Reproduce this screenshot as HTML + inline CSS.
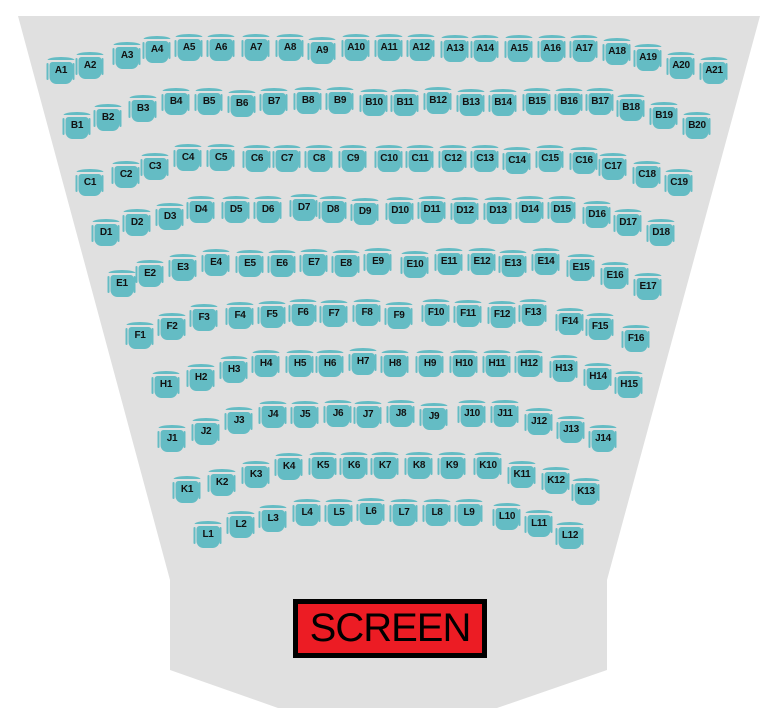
<!DOCTYPE html>
<html><head><meta charset="utf-8"><style>
html,body{margin:0;padding:0;background:#fff;}
body{width:776px;height:726px;position:relative;overflow:hidden;font-family:"Liberation Sans",sans-serif;}
i{position:absolute;display:block;font-style:normal;width:23px;height:22px;transform:translate(-11.5px,-9px);background:#64bcc4;border-radius:3px 3px 7px 7px;font-size:10px;font-weight:bold;color:#111;text-align:center;line-height:18px;letter-spacing:-0.3px;}
i::before{content:"";position:absolute;left:-2px;top:-5px;width:27px;height:3px;background:#64bcc4;border-radius:50% 50% 0 0/100% 100% 0 0;}
i::after{content:"";position:absolute;left:-3px;top:1px;width:2px;height:17px;background:#64bcc4;border-radius:2px;box-shadow:26px 0 0 #64bcc4;}
.scr{position:absolute;left:293px;top:599px;width:184px;height:49px;border:5px solid #000;background:#ec1c24;font-family:"Liberation Sans",sans-serif;font-size:40px;line-height:49px;color:#000;text-align:center;letter-spacing:-1px;}
</style></head><body>
<svg width="776" height="726" style="position:absolute;left:0;top:0"><polygon points="18,16 760,16 607,580 607,670 497,708 278,708 170,670 170,580" fill="#e0e0e0"/></svg>
<i style="left:61px;top:71px">A1</i><i style="left:90px;top:66px">A2</i><i style="left:127px;top:56px">A3</i><i style="left:157px;top:50px">A4</i><i style="left:189px;top:48px">A5</i><i style="left:221px;top:48px">A6</i><i style="left:256px;top:48px">A7</i><i style="left:290px;top:48px">A8</i><i style="left:322px;top:51px">A9</i><i style="left:356px;top:48px">A10</i><i style="left:389px;top:48px">A11</i><i style="left:421px;top:48px">A12</i><i style="left:455px;top:49px">A13</i><i style="left:485px;top:49px">A14</i><i style="left:519px;top:49px">A15</i><i style="left:552px;top:49px">A16</i><i style="left:584px;top:49px">A17</i><i style="left:617px;top:52px">A18</i><i style="left:648px;top:58px">A19</i><i style="left:681px;top:66px">A20</i><i style="left:714px;top:71px">A21</i>
<i style="left:77px;top:126px">B1</i><i style="left:108px;top:118px">B2</i><i style="left:143px;top:109px">B3</i><i style="left:176px;top:102px">B4</i><i style="left:209px;top:102px">B5</i><i style="left:242px;top:104px">B6</i><i style="left:274px;top:102px">B7</i><i style="left:308px;top:101px">B8</i><i style="left:340px;top:101px">B9</i><i style="left:374px;top:103px">B10</i><i style="left:405px;top:103px">B11</i><i style="left:438px;top:101px">B12</i><i style="left:471px;top:103px">B13</i><i style="left:503px;top:103px">B14</i><i style="left:537px;top:102px">B15</i><i style="left:569px;top:102px">B16</i><i style="left:600px;top:102px">B17</i><i style="left:631px;top:108px">B18</i><i style="left:664px;top:116px">B19</i><i style="left:697px;top:126px">B20</i>
<i style="left:90px;top:183px">C1</i><i style="left:126px;top:175px">C2</i><i style="left:155px;top:167px">C3</i><i style="left:188px;top:158px">C4</i><i style="left:221px;top:158px">C5</i><i style="left:257px;top:159px">C6</i><i style="left:287px;top:159px">C7</i><i style="left:319px;top:159px">C8</i><i style="left:353px;top:159px">C9</i><i style="left:389px;top:159px">C10</i><i style="left:420px;top:159px">C11</i><i style="left:453px;top:159px">C12</i><i style="left:485px;top:159px">C13</i><i style="left:517px;top:161px">C14</i><i style="left:550px;top:159px">C15</i><i style="left:584px;top:161px">C16</i><i style="left:613px;top:167px">C17</i><i style="left:647px;top:175px">C18</i><i style="left:679px;top:183px">C19</i>
<i style="left:106px;top:233px">D1</i><i style="left:137px;top:223px">D2</i><i style="left:170px;top:217px">D3</i><i style="left:201px;top:210px">D4</i><i style="left:236px;top:210px">D5</i><i style="left:268px;top:210px">D6</i><i style="left:304px;top:208px">D7</i><i style="left:333px;top:210px">D8</i><i style="left:365px;top:212px">D9</i><i style="left:400px;top:211px">D10</i><i style="left:432px;top:210px">D11</i><i style="left:465px;top:211px">D12</i><i style="left:498px;top:211px">D13</i><i style="left:530px;top:210px">D14</i><i style="left:562px;top:210px">D15</i><i style="left:597px;top:215px">D16</i><i style="left:628px;top:223px">D17</i><i style="left:661px;top:233px">D18</i>
<i style="left:122px;top:284px">E1</i><i style="left:150px;top:274px">E2</i><i style="left:183px;top:268px">E3</i><i style="left:216px;top:263px">E4</i><i style="left:250px;top:264px">E5</i><i style="left:282px;top:264px">E6</i><i style="left:314px;top:263px">E7</i><i style="left:346px;top:264px">E8</i><i style="left:378px;top:262px">E9</i><i style="left:415px;top:265px">E10</i><i style="left:449px;top:262px">E11</i><i style="left:482px;top:262px">E12</i><i style="left:513px;top:264px">E13</i><i style="left:546px;top:262px">E14</i><i style="left:581px;top:268px">E15</i><i style="left:615px;top:276px">E16</i><i style="left:648px;top:287px">E17</i>
<i style="left:140px;top:336px">F1</i><i style="left:172px;top:327px">F2</i><i style="left:204px;top:318px">F3</i><i style="left:240px;top:316px">F4</i><i style="left:272px;top:315px">F5</i><i style="left:303px;top:313px">F6</i><i style="left:334px;top:314px">F7</i><i style="left:367px;top:313px">F8</i><i style="left:399px;top:316px">F9</i><i style="left:436px;top:313px">F10</i><i style="left:468px;top:314px">F11</i><i style="left:502px;top:315px">F12</i><i style="left:533px;top:313px">F13</i><i style="left:570px;top:322px">F14</i><i style="left:600px;top:327px">F15</i><i style="left:636px;top:339px">F16</i>
<i style="left:166px;top:385px">H1</i><i style="left:201px;top:378px">H2</i><i style="left:234px;top:370px">H3</i><i style="left:266px;top:364px">H4</i><i style="left:300px;top:364px">H5</i><i style="left:330px;top:364px">H6</i><i style="left:363px;top:362px">H7</i><i style="left:395px;top:364px">H8</i><i style="left:430px;top:364px">H9</i><i style="left:464px;top:364px">H10</i><i style="left:497px;top:364px">H11</i><i style="left:529px;top:364px">H12</i><i style="left:564px;top:369px">H13</i><i style="left:598px;top:377px">H14</i><i style="left:629px;top:385px">H15</i>
<i style="left:172px;top:439px">J1</i><i style="left:206px;top:432px">J2</i><i style="left:239px;top:421px">J3</i><i style="left:273px;top:415px">J4</i><i style="left:305px;top:415px">J5</i><i style="left:338px;top:414px">J6</i><i style="left:368px;top:415px">J7</i><i style="left:401px;top:414px">J8</i><i style="left:434px;top:417px">J9</i><i style="left:472px;top:414px">J10</i><i style="left:505px;top:414px">J11</i><i style="left:539px;top:422px">J12</i><i style="left:571px;top:430px">J13</i><i style="left:603px;top:439px">J14</i>
<i style="left:187px;top:490px">K1</i><i style="left:222px;top:483px">K2</i><i style="left:256px;top:475px">K3</i><i style="left:289px;top:467px">K4</i><i style="left:323px;top:466px">K5</i><i style="left:354px;top:466px">K6</i><i style="left:385px;top:466px">K7</i><i style="left:419px;top:466px">K8</i><i style="left:452px;top:466px">K9</i><i style="left:488px;top:466px">K10</i><i style="left:522px;top:475px">K11</i><i style="left:556px;top:481px">K12</i><i style="left:586px;top:492px">K13</i>
<i style="left:208px;top:535px">L1</i><i style="left:241px;top:525px">L2</i><i style="left:273px;top:519px">L3</i><i style="left:307px;top:513px">L4</i><i style="left:339px;top:513px">L5</i><i style="left:371px;top:512px">L6</i><i style="left:404px;top:513px">L7</i><i style="left:437px;top:513px">L8</i><i style="left:469px;top:513px">L9</i><i style="left:507px;top:517px">L10</i><i style="left:539px;top:524px">L11</i><i style="left:570px;top:536px">L12</i>
<div class="scr">SCREEN</div>
</body></html>
